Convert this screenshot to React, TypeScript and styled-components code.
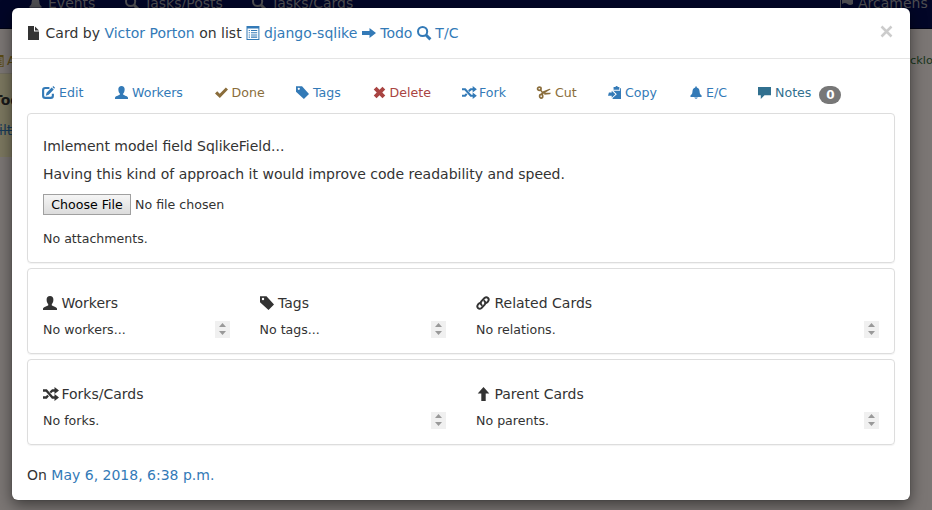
import React from 'react';
import styled, { createGlobalStyle } from 'styled-components';

const GlobalStyle = createGlobalStyle`
  * { box-sizing: border-box; }
  body { margin: 0; font-family: "DejaVu Sans", sans-serif; font-size: 14px; line-height: 20px; color: #333; overflow: hidden; }
  h4, p { margin: 0; font-weight: normal; font-size: 14px; }
  a { color: #337ab7; text-decoration: none; }
`;

type IconName = 'file' | 'list' | 'right' | 'search' | 'edit' | 'user' | 'ok' | 'tag' | 'remove' | 'random' | 'cut' | 'copy' | 'bell' | 'comment' | 'link' | 'up' | 'flag';

const shapes: Record<IconName, React.ReactNode> = {
  file: <><path d="M1 0h6v5.5h5V14H1z" /><path d="M8 0.5v4h4z" /></>,
  list: <path fillRule="evenodd" d="M.5 0h12.9v14H.5zM1.5 2.5V13h10.9V2.5zM2.7 4h1.2v1.1H2.7zm2.3 0h6.2v1.1H5zM2.7 6.2h1.2v1.1H2.7zm2.3 0h6.2v1.1H5zM2.7 8.4h1.2v1.1H2.7zm2.3 0h6.2v1.1H5zM2.7 10.6h1.2v1.1H2.7zm2.3 0h6.2v1.1H5z" />,
  right: <path d="M0 5h7.5V2L14 7l-6.5 5V9H0z" />,
  search: <g fill="none" stroke="currentColor"><circle cx="5.6" cy="5.5" r="4.6" strokeWidth="2" /><path d="M9 9l4.4 4.4" strokeWidth="2.9" /></g>,
  edit: <><path d="M8 2.2H3.5Q1.2 2.2 1.2 4.5v6q0 2.3 2.3 2.3h6q2.2 0 2.2-2.3V8.3" fill="none" stroke="currentColor" strokeWidth="2.3" /><path d="M4.9 7.2l5.5-5.7 2.3 2.3-5.5 5.7-3.1.9zM11.2 1l1-1L14 1.9l-.9 1z" /></>,
  user: <path d="M7 0c2.200 0 3.500 1.400 3.400 3.800C10.300 6.300 9.500 7.500 8.800 8v1.200c0 .6 4.300 1.700 5 2.800.3.500.2 1.300.2 2H0c0-.7-.1-1.500.2-2 .7-1.100 5-2.200 5-2.800V8C4.500 7.500 3.700 6.300 3.600 3.800 3.500 1.400 4.800 0 7 0z" />,
  ok: <path d="M0 8l2.400-2.300 2.700 2.600L11.700 1.500 14 3.700 5.200 12.800z" />,
  tag: <path fillRule="evenodd" d="M0 .3L6.500.2 14 8.500 8.500 14 0 6.200zM1.800 3a1.200 1.200 0 1 0 2.400 0 1.200 1.200 0 1 0-2.400 0z" />,
  remove: <path d="M.8 3.800L3.800.8 7 4l3.200-3.200 3 3L10 7l3.200 3.200-3 3L7 10l-3.200 3.200-3-3L4 7z" />,
  random: <><path d="M0 3.500h3.300L9.500 10.500h3M0 10.500h3.300l1.800-2M7.300 5.500l2.200-2h3" fill="none" stroke="currentColor" strokeWidth="2.300" /><path d="M11.500 0L16 3.500l-4.500 3.500zM11.500 7L16 10.500 11.500 14z" /></>,
  cut: <><g fill="none" stroke="currentColor" strokeWidth="1.800"><ellipse cx="2.500" cy="3" rx="1.900" ry="1.700" /><ellipse cx="4.500" cy="11" rx="1.700" ry="2" /></g><path d="M4 3.300L6 5.800 13.500 3q1 .1 1 .9L7.300 8.200 5.900 10 4 8.800 5 7 2.800 4.700zM7.500 7.400l7.300-.2q-.2 1.900-1.400 1.800L8 9.300z" /></>,
  copy: <><path fillRule="evenodd" d="M6 1h2q.2-1 1.300-1t1.300 1h1.600v3H6zM5.300 4.600L9.500 8.800 5 13V14h9V2.500h-1V5H5.300z" /><path d="M1 7h3V5l4 3.800-4 3.800v-2H0z" /></>,
  bell: <path d="M5.700.9Q6.500-.5 7.300.9v.7c2.600.5 3 3 3.100 4.900.1 2 .8 2.700 2.100 3.800v1.500H.5v-1.500C1.800 9.200 2.500 8.500 2.600 6.500c.1-1.900.5-4.400 3.100-4.900zM4.500 12.300h4Q6.500 15 4.500 12.300z" />,
  comment: <path d="M0 1h14v9H7l-4 4v-4H0z" />,
  link: <g fill="none" stroke="currentColor" strokeWidth="1.900" strokeLinecap="round"><path d="M5.700 9.200Q3.800 7.200 5.300 5.400L8.500 2q1.800-1.600 3.500 0 1.500 1.600 0 3.500l-1.400 1.400" /><path d="M8.300 4.800q1.900 2 .4 3.800L5.500 12q-1.800 1.600-3.500 0-1.500-1.600 0-3.500l1.400-1.400" /></g>,
  up: <path d="M7.500 0L13.300 6.500H9.700V14H5.300V6.500H1.700z" />,
  flag: <path d="M0 0h1v14H0zM2 2q3-2 5 0t6 0v6q-3 2-5.500 0T2 8z" />,
};

const Svg = styled.svg`flex: none; fill: currentColor; display: block; overflow: visible;`;
const Icon = ({ name, size = 14 }: { name: IconName; size?: number }) => (
  <Svg width={size} height={size} viewBox="0 0 14 14">{shapes[name]}</Svg>
);

const Screen = styled.div`position: relative; width: 932px; height: 510px; overflow: hidden; background: #7b7674;`;
const Navbar = styled.nav`
  height: 29px; background: #020627; border-bottom: 1px solid #010314; color: #4e4e52;
  display: grid; grid-template-columns: 96px 127px 588px auto; padding-left: 29px;
`;
const NavItem = styled.span<{ $gap?: number }>`
  display: flex; gap: ${p => p.$gap ?? 5}px; align-items: center; height: 20px; margin-top: -7px; white-space: nowrap;
`;
const SubNav = styled.div`
  height: 44px; display: flex; justify-content: space-between; align-items: center; padding-top: 20px;
  font-size: 12.6px; line-height: 16px; color: #5a4a15;
`;
const SubLeft = styled.span`display: flex; gap: 3px; align-items: center; margin-left: -8px;`;
const SubRight = styled.span`width: 22px; white-space: nowrap; color: #17351a; font-size: 11.3px;`;
const BoardColumn = styled.div`width: 240px; height: 84px; background: #7b775f; padding-top: 16px; border-top: 1px solid #716d61;`;
const ColumnTitle = styled.div`font-weight: bold; color: #191919; margin-left: -7px;`;
const StruckLink = styled.div`color: #193c5a; text-decoration: line-through; margin-top: 10px; margin-left: -1px;`;

const Modal = styled.section`
  position: absolute; left: 12px; top: 8px; width: 898px; height: 492px; background: #fff;
  border-radius: 6px; box-shadow: 0 5px 15px rgba(0,0,0,.5), 0 0 1px rgba(0,0,0,.5);
`;
const Header = styled.header`
  height: 51px; border-bottom: 1px solid #e5e5e5; padding: 0 17px 0 15px;
  display: flex; align-items: center; justify-content: space-between;
`;
const Title = styled.h4`display: flex; align-items: center; white-space: pre;`;
const TitleLink = styled.a<{ $gap?: number }>`display: flex; align-items: center; gap: ${p => p.$gap ?? 4}px;`;
const TitleText = styled.span`margin-left: 4.6px;`;
const Close = styled.button`
  width: 13px; height: 13px; padding: 0; border: 0; background: none; color: #ccc; margin-top: -4px;
`;
const Body = styled.main`padding: 24px 15px 0;`;
const Toolbar = styled.nav`
  display: grid; grid-template-columns: 73px 100px 81px 77px 89px 75px 71px 82px 68px auto;
  height: 20px; padding-left: 15px; align-items: center; font-size: 12.6px;
`;
const Action = styled.a<{ $color?: string; $gap?: number }>`
  display: flex; align-items: center; gap: ${p => p.$gap ?? 4}px; color: ${p => p.$color ?? '#337ab7'}; white-space: nowrap;
  & > svg { margin-bottom: 2px; }
`;
const Badge = styled.span`
  width: 22px; height: 18px; border-radius: 10px; background: #777; color: #fff; font-weight: bold;
  font-size: 12px; line-height: 18px; text-align: center; margin: 2px 0 -1px 4px;
`;
const Panel = styled.div<{ $height: number; $top?: number }>`
  height: ${p => p.$height}px; margin-top: ${p => p.$top ?? 5}px; border: 1px solid #ddd; border-radius: 4px;
  box-shadow: 0 1px 1px rgba(0,0,0,.05); padding: 22px 15px 0;
`;
const Paragraph = styled.p`margin-bottom: 8px;`;
const FileRow = styled.div`display: flex; align-items: center; gap: 4px; font-size: 12.6px; margin-top: 10px;`;
const FileButton = styled.button`
  width: 88px; height: 21px; padding: 0; border: 1px solid #a0a0a0; border-radius: 0;
  background: linear-gradient(#f5f5f5, #dcdcdc); color: #000; font: 12.6px "DejaVu Sans", sans-serif;
`;
const Small = styled.p`font-size: 12.6px;`;
const Attachments = styled(Small)`margin-top: 14px;`;
const Columns = styled.div<{ $template: string }>`display: grid; grid-template-columns: ${p => p.$template}; column-gap: 30px;`;
const Heading = styled.h4`display: flex; align-items: center; gap: 4.45px; height: 24px; & > svg { margin-bottom: 1px; }`;
const ListRow = styled.div`display: flex; align-items: center; justify-content: space-between; height: 20px; margin-top: 4px;`;
const ListText = styled(Small)`padding-top: 1px;`;
const Stepper = styled.span`
  width: 15px; height: 17px; background: #f0f0f0; color: #999; display: flex; align-items: center; justify-content: center;
`;
const Footer = styled.p`margin-top: 20px;`;

const Section = ({ icon, title, text }: { icon: IconName; title: string; text: string }) => (
  <div>
    <Heading><Icon name={icon} />{title}</Heading>
    <ListRow>
      <ListText>{text}</ListText>
      <Stepper><Svg width="7" height="12" viewBox="0 0 7 12"><path d="M0 4L3.500 0 7 4zM0 8h7L3.500 12z" /></Svg></Stepper>
    </ListRow>
  </div>
);

const actions: { icon: IconName; label: string; color?: string; gap?: number }[] = [
  { icon: 'edit', label: 'Edit' },
  { icon: 'user', label: 'Workers' },
  { icon: 'ok', label: 'Done', color: '#8a6d3b', gap: 3.5 },
  { icon: 'tag', label: 'Tags' },
  { icon: 'remove', label: 'Delete', color: '#a94442', gap: 3.5 },
  { icon: 'random', label: 'Fork' },
  { icon: 'cut', label: 'Cut', color: '#8a6d3b', gap: 5 },
  { icon: 'copy', label: 'Copy' },
  { icon: 'bell', label: 'E/C', gap: 3 },
  { icon: 'comment', label: 'Notes', color: '#31708f' },
];

export default function App() {
  return (
    <>
      <GlobalStyle />
      <Screen>
        <Navbar>
          <NavItem><Icon name="bell" />Events</NavItem>
          <NavItem><Icon name="search" />Tasks/Posts</NavItem>
          <NavItem><Icon name="search" />Tasks/Cards</NavItem>
          <NavItem $gap={4}><Icon name="flag" />Arcamens</NavItem>
        </Navbar>
        <SubNav>
          <SubLeft><Icon name="list" size={12} />Archive</SubLeft>
          <SubRight>cklog</SubRight>
        </SubNav>
        <BoardColumn>
          <ColumnTitle>Todo</ColumnTitle>
          <StruckLink>ilter</StruckLink>
        </BoardColumn>

        <Modal role="dialog">
          <Header>
            <Title>
              <Icon name="file" /><TitleText>Card by </TitleText><a>Victor Porton</a> on list{' '}
              <TitleLink><Icon name="list" />django-sqlike </TitleLink>
              <TitleLink $gap={4.5}><Icon name="right" />Todo </TitleLink>
              <TitleLink $gap={4.5}><Icon name="search" />T/C</TitleLink>
            </Title>
            <Close aria-label="Close">
              <Svg width="13" height="13" viewBox="0 0 13 13"><path d="M1.500 1.500l10 10m0-10l-10 10" stroke="currentColor" strokeWidth="2.500" /></Svg>
            </Close>
          </Header>
          <Body>
            <Toolbar>
              {actions.map(a => (
                <Action key={a.label} $color={a.color} $gap={a.gap}>
                  <Icon name={a.icon} size={13} />{a.label}
                  {a.icon === 'comment' && <Badge>0</Badge>}
                </Action>
              ))}
            </Toolbar>
            <Panel $height={150} $top={10}>
              <Paragraph>Imlement model field SqlikeField...</Paragraph>
              <Paragraph>Having this kind of approach it would improve code readability and speed.</Paragraph>
              <FileRow><FileButton>Choose File</FileButton>No file chosen</FileRow>
              <Attachments>No attachments.</Attachments>
            </Panel>
            <Panel $height={86}>
              <Columns $template="186.5px 186.5px 1fr">
                <Section icon="user" title="Workers" text="No workers..." />
                <Section icon="tag" title="Tags" text="No tags..." />
                <Section icon="link" title="Related Cards" text="No relations." />
              </Columns>
            </Panel>
            <Panel $height={86}>
              <Columns $template="403px 1fr">
                <Section icon="random" title="Forks/Cards" text="No forks." />
                <Section icon="up" title="Parent Cards" text="No parents." />
              </Columns>
            </Panel>
            <Footer>On <a>May 6, 2018, 6:38 p.m.</a></Footer>
          </Body>
        </Modal>
      </Screen>
    </>
  );
}
